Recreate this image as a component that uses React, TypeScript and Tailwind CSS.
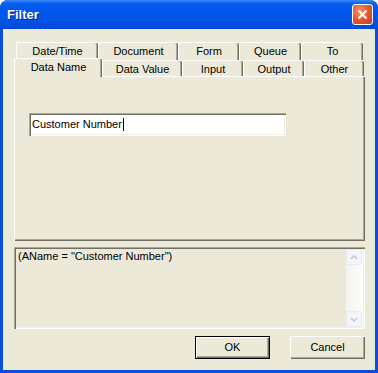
const raised =
  "shadow-[inset_1px_1px_0_#ffffff,inset_-1px_-1px_0_#716f64,inset_-2px_-2px_0_#aca899]";
const sunken =
  "shadow-[inset_1px_1px_0_#aca899,inset_2px_2px_0_#716f64,inset_-1px_-1px_0_#ffffff,inset_-2px_-2px_0_#f1efe2]";

const backTabs = [
  { label: "Date/Time", w: "w-[82px]" },
  { label: "Document", w: "w-[80px]" },
  { label: "Form", w: "w-[61px]" },
  { label: "Queue", w: "w-[62px]" },
  { label: "To", w: "w-[62px]" },
];

const frontTabs = [
  { label: "Data Value", w: "w-[80px]" },
  { label: "Input", w: "w-[61px]" },
  { label: "Output", w: "w-[61px]" },
  { label: "Other", w: "w-[60px]" },
];

function Tab({ label, w, top }: { label: string; w: string; top?: boolean }) {
  return (
    <div
      className={`${w} ${top ? "h-[18px]" : "mt-[2px] h-[16px]"} flex items-start justify-center rounded-t-[2px] bg-[#ece9d8] pt-[2px] border-l border-t border-white shadow-[inset_-1px_0_0_#716f64,inset_-2px_0_0_#aca899]`}
    >
      <span className="leading-[13px]">{label}</span>
    </div>
  );
}

function Arrow({ up }: { up?: boolean }) {
  return (
    <div className="flex h-[16px] w-[16px] items-center justify-center rounded-[2px] border border-[#e8ebf1] bg-[#f4f5f8]">
      <svg viewBox="0 0 8 5" className="h-[5px] w-[8px]" fill="none">
        <path
          d={up ? "M1 4 4 1 7 4" : "M1 1 4 4 7 1"}
          stroke="#c3c7d1"
          strokeWidth="1.6"
        />
      </svg>
    </div>
  );
}

export default function App() {
  return (
    <div
      className="flex h-[373px] w-[378px] flex-col rounded-t-[8px] bg-[#0a4fdc] text-[11px] text-black"
      style={{ fontFamily: '"Liberation Sans", Arial, sans-serif' }}
    >
      <div className="flex h-[29px] items-center justify-between rounded-t-[8px] bg-[linear-gradient(#3a8cf6_0%,#0a5ff0_12%,#0058ee_30%,#0054e6_70%,#0049d8_100%)] pl-[7px] pr-[5px]">
        <span className="text-[13px] font-bold text-white [text-shadow:1px_1px_0_#0a1e8c]">
          Filter
        </span>
        <div className="flex h-[21px] w-[21px] items-center justify-center rounded-[3px] border border-white bg-[radial-gradient(circle_at_35%_30%,#f0906a,#e0532f_55%,#c4401f)]">
          <svg viewBox="0 0 11 11" className="h-[11px] w-[11px]">
            <path d="M1.5 1.5 9.5 9.5M9.5 1.5 1.5 9.5" stroke="white" strokeWidth="2.2" />
          </svg>
        </div>
      </div>

      <div className="mx-[3px] mb-[3px] flex flex-1 flex-col bg-[#ece9d8] pl-[11px] pr-[10px] pt-[13px]">
        <div className="ml-[2px] flex h-[18px]">
          {backTabs.map((t) => (
            <Tab key={t.label} label={t.label} w={t.w} top />
          ))}
        </div>
        <div className="relative z-10 -mt-[2px] flex h-[18px]">
          <div className="flex h-[19px] w-[88px] items-start justify-center rounded-t-[2px] border-l border-t border-white bg-[#ece9d8] pt-[2px] shadow-[inset_-1px_0_0_#716f64,inset_-2px_0_0_#aca899]">
            <span className="leading-[13px]">Data Name</span>
          </div>
          {frontTabs.map((t) => (
            <Tab key={t.label} label={t.label} w={t.w} />
          ))}
        </div>

        <div className={`h-[165px] w-[351px] pl-[15px] pt-[37px] ${raised}`}>
          <div className={`flex h-[23px] w-[257px] items-center bg-white px-[3px] ${sunken}`}>
            <span>Customer Number</span>
            <span className="ml-px h-[13px] w-px bg-black" />
          </div>
        </div>

        <div className={`mt-[6px] flex h-[82px] w-[351px] p-[2px] ${sunken}`}>
          <div className="flex-1 pl-[2px] pt-px leading-[13px]">(AName = "Customer Number")</div>
          <div className="flex w-[17px] flex-col justify-between bg-[linear-gradient(90deg,#f3f1ec,#fefefb)] pr-px">
            <Arrow up />
            <Arrow />
          </div>
        </div>

        <div className="mt-[7px] flex justify-end gap-[20px]">
          <div className="flex h-[23px] w-[75px] items-center justify-center border border-black bg-[#ece9d8] shadow-[inset_1px_1px_0_#ffffff,inset_-1px_-1px_0_#716f64,inset_-2px_-2px_0_#aca899]">
            OK
          </div>
          <div className={`flex h-[23px] w-[75px] items-center justify-center bg-[#ece9d8] ${raised}`}>
            Cancel
          </div>
        </div>
      </div>
    </div>
  );
}
